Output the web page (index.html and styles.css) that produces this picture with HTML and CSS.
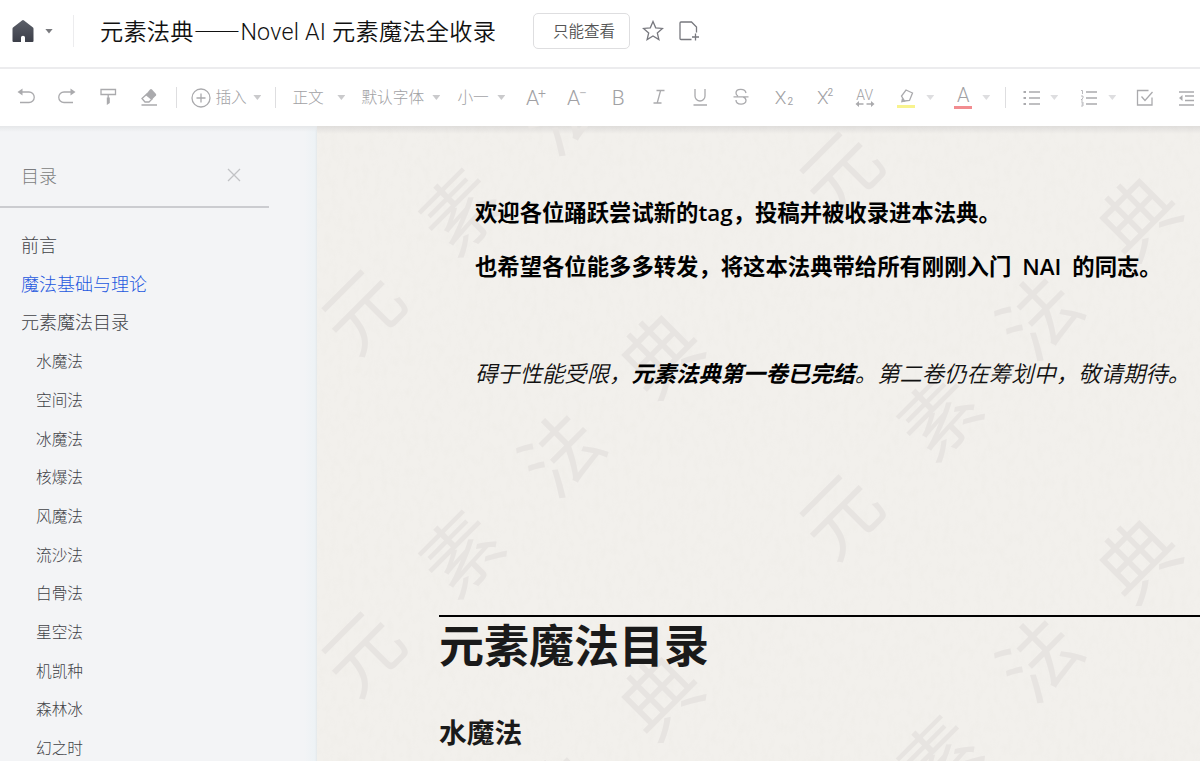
FILE: index.html
```html
<!DOCTYPE html>
<html lang="zh-CN">
<head>
    <meta charset="UTF-8">
    <meta name="viewport" content="width=device-width, initial-scale=1.0">
    <title>元素法典——Novel AI 元素魔法全收录</title>
    <link rel="stylesheet" href="styles.css">
</head>
<body>
    <header class="header">
        <svg class="home" width="24" height="24" viewBox="0 0 24 24">
            <defs><linearGradient id="homeFill" x1="0" y1="0" x2="0" y2="1"><stop offset="0" stop-color="#5c6069"/><stop offset="1" stop-color="#3b3e48"/></linearGradient></defs>
            <path fill="url(#homeFill)" d="M12 1 Q12.500 1 13 1.400L22 8.600Q22.500 9 22.500 10V22Q22.500 23 21.500 23H14V18.500Q14 16.800 12 16.800T10 18.500V23H2.500Q1.500 23 1.500 22V10Q1.500 9 2 8.600L11 1.400Q11.500 1 12 1Z"/>
        </svg>
        <i class="caret caret-dark"></i>
        <span class="header-line"></span>
        <h1 class="title">元素法典<span class="dash">——</span>Novel AI 元素魔法全收录</h1>
        <button class="readonly">只能查看</button>
        <svg class="star" width="22" height="22" viewBox="0 0 22 22"><path d="M11 1.500l2.700 6.300 6.800.6-5.200 4.500 1.600 6.700-5.900-3.600-5.900 3.600 1.600-6.700L1.500 8.400l6.800-.6z"/></svg>
        <svg class="addfile" width="22" height="22" viewBox="0 0 22 22"><path d="M13.500 19.500H3Q2 19.500 2 18.500V3Q2 2 3 2H13.500L18.500 7V12.500M17.500 13.500V20.500M14 17H21"/></svg>
    </header>

    <nav class="toolbar">
        <span class="tool"><svg width="20" height="20" viewBox="0 0 20 20"><path d="M3 5H13A4.900 4.900 0 0 1 13 15.500H4"/><path class="solid" d="M6.500 1.500V8.500L1.500 5Z"/></svg></span>
        <span class="tool"><svg width="20" height="20" viewBox="0 0 20 20"><path d="M17 5H7A4.900 4.900 0 0 0 7 15.500H16"/><path class="solid" d="M13.500 1.500V8.500L18.500 5Z"/></svg></span>
        <span class="tool"><svg width="20" height="20" viewBox="0 0 20 20"><path d="M3 2.500H17.500V7.500H3ZM10.200 7.500V11"/><path class="solid" d="M8.800 10.500H11.800V16L8.800 18Z"/></svg></span>
        <span class="tool"><svg width="20" height="20" viewBox="0 0 20 20"><path d="M2.500 18H18M3 11.500L8 7L13 12L10 15H6Z"/><path class="solid" d="M6.500 8L11 2.500Q12 1.500 13 2.500L17 7Q17.500 8 17 8.500L12.500 13Z"/></svg></span>
        <span class="line line-first"></span>
        <svg class="plus" width="20" height="20" viewBox="0 0 20 20"><circle cx="10" cy="10" r="9"/><path d="M5.500 10H14.500M10 5.500V14.500"/></svg>
        <span class="label insert">插入</span><i class="caret caret-insert"></i>
        <span class="line line-style"></span>
        <span class="label style">正文</span><i class="caret"></i>
        <span class="label family">默认字体</span><i class="caret"></i>
        <span class="label size">小一</span><i class="caret caret-size"></i>
        <span class="tool letter">A<sup>+</sup></span>
        <span class="tool letter">A<sup>−</sup></span>
        <span class="tool letter bold">B</span>
        <span class="tool letter"><svg width="20" height="20" viewBox="0 0 20 20"><path d="M7.500 3.500H15.500M4.500 16H12.500M11.600 3.500L8.200 16"/></svg></span>
        <span class="tool letter"><svg width="20" height="20" viewBox="0 0 20 20"><path d="M5 2V9A5 5 0 0 0 15 9V2M3.500 18H17"/></svg></span>
        <span class="tool letter"><svg width="20" height="20" viewBox="0 0 20 20"><path d="M15 6C14 1 5 1.500 5 6Q5 8 7 9M2.500 9.800H17.500M12 9.800Q15 11 15 13.500C15 18.500 5 18.500 5 13"/></svg></span>
        <span class="tool letter x-letter">X<sub>2</sub></span>
        <span class="tool letter x-letter">X<sup>2</sup></span>
        <span class="tool spacing"><span>AV</span><svg width="20" height="6" viewBox="0 0 20 6"><path d="M2 3H8.500M11.500 3H18"/><path class="solid" d="M4 0V6L.5 3ZM16 0V6L19.500 3Z"/></svg></span>
        <span class="tool"><svg class="marker" width="20" height="22" viewBox="0 0 20 22"><path d="M10 2L16.500 5L13.500 12.500L8.500 13L5.500 8Z"/><path class="solid" d="M6 10L9.500 13.500L5 14.500Z"/><path class="yellow" d="M1 18.500H19"/></svg></span>
        <i class="caret light caret-marker"></i>
        <span class="color"><span>A</span></span>
        <i class="caret light"></i>
        <span class="line line-list"></span>
        <svg width="20" height="20" viewBox="0 0 20 20"><path d="M7 4H18M7 10H18M7 16H18"/><path class="solid" d="M1.500 3H4V5H1.500ZM1.500 9H4V11H1.500ZM1.500 15H4V17H1.500Z"/></svg>
        <i class="caret light"></i>
        <svg class="numbers" width="20" height="20" viewBox="0 0 20 20"><path d="M7 4H18M7 10H18M7 16H18"/><path class="thin" d="M2 2.500H3.500V6M2 8H4V10L2 12H4M2 14H4V18H2M2.500 16H4"/></svg>
        <i class="caret light"></i>
        <svg class="check" width="20" height="20" viewBox="0 0 20 20"><path d="M13.500 2.500H2.500V17H17V9.500M6.500 8.500L10 12.500L17.500 4"/></svg>
        <svg class="indent" width="20" height="20" viewBox="0 0 20 20"><path d="M2 4H17M8 8H17M8 12.500H17M2 17H17"/><path class="solid" d="M5.500 7V13L2 10Z"/></svg>
    </nav>

    <div class="content">
        <aside class="sidebar">
            <div class="sidebar-head">
                <span>目录</span>
                <svg width="14" height="14" viewBox="0 0 14 14"><path d="M1 1L13 13M13 1L1 13"/></svg>
            </div>
            <ul class="catalog">
                <li>前言</li>
                <li class="active">魔法基础与理论</li>
                <li>元素魔法目录</li>
                <li class="child">水魔法</li>
                <li class="child">空间法</li>
                <li class="child">冰魔法</li>
                <li class="child">核爆法</li>
                <li class="child">风魔法</li>
                <li class="child">流沙法</li>
                <li class="child">白骨法</li>
                <li class="child">星空法</li>
                <li class="child">机凯种</li>
                <li class="child">森林冰</li>
                <li class="child">幻之时</li>
            </ul>
        </aside>

        <main class="paper">
            <svg class="watermark" width="884" height="635" viewBox="316 126 884 635">
                <defs>
                    <filter id="grain" x="0" y="0" width="100%" height="100%">
                        <feTurbulence type="fractalNoise" baseFrequency="0.16 0.09" numOctaves="3" seed="4"/>
                        <feColorMatrix values="0 0 0 0 .55  0 0 0 0 .52  0 0 0 0 .46  .7 0 0 0 -.3"/>
                    </filter>
                    <g id="mark">
                        <text transform="translate(0 0) rotate(-45)" y="28">元</text>
                        <text transform="translate(99 -99) rotate(-45)" y="28">素</text>
                        <text transform="translate(199 -199) rotate(-45)" y="28">法</text>
                        <text transform="translate(298 -298) rotate(-45)" y="28">典</text>
                    </g>
                </defs>
                <rect x="316" y="126" width="884" height="635" filter="url(#grain)" opacity=".13"/>
                <use href="#mark" x="363" y="311"/>
                <use href="#mark" x="363" y="653"/>
                <use href="#mark" x="363" y="995"/>
                <use href="#mark" x="841" y="173"/>
                <use href="#mark" x="841" y="516"/>
                <use href="#mark" x="841" y="858"/>
            </svg>
            <article class="doc">
                <p class="strong">欢迎各位踊跃尝试新的<span class="latin">tag</span>，投稿并被收录进本法典。</p>
                <p class="strong">也希望各位能多多转发，将这本法典带给所有刚刚入门<span class="latin nai">NAI</span>的同志。</p>
                <p class="notice">碍于性能受限，<b>元素法典第一卷已完结</b>。第二卷仍在筹划中，敬请期待。</p>
                <h2>元素魔法目录</h2>
                <h3>水魔法</h3>
            </article>
        </main>
    </div>
</body>
</html>
```
FILE: styles.css
```css
* {
    box-sizing: border-box;
}

body {
    margin: 0;
    height: 761px;
    overflow: hidden;
    font-family: Roboto, "Noto Sans CJK SC", sans-serif;
    font-weight: 300;
    color: #222;
    background: #fff;
}

svg {
    flex: none;
    fill: none;
    stroke: #aaaaad;
    stroke-width: 1.3;
}

.header {
    display: flex;
    align-items: center;
    height: 69px;
    padding: 0 0 5px 11px;
    border-bottom: 2px solid #ececee;
}

.home {
    stroke: none;
}

.caret {
    flex: none;
    width: 8px;
    height: 5px;
    background: #cacacc;
    clip-path: polygon(0 0, 100% 0, 50% 100%);
}

.caret-dark {
    margin-left: 10px;
    background: #797a7e;
}

.light {
    background: #dedee0;
}

.header-line {
    width: 1px;
    height: 32px;
    margin: 0 26px 0 20px;
    background: #ececee;
}

.title {
    width: 433px;
    margin: 0;
    font-size: 23.2px;
    font-weight: 350;
    letter-spacing: .25px;
    line-height: 34px;
    white-space: nowrap;
    color: #111;
}

.dash {
    font-family: "Noto Sans CJK SC", sans-serif;
}

.readonly {
    width: 97px;
    height: 36px;
    padding: 0 0 2px 5px;
    border: 1px solid #dedee0;
    border-radius: 5px;
    background: #fff;
    font: 350 15.5px "Noto Sans CJK SC", sans-serif;
    color: #555;
}

.star {
    margin-left: 12px;
    stroke: #77787e;
}

.addfile {
    margin-left: 14px;
    stroke: #77787e;
}

.toolbar {
    display: flex;
    align-items: center;
    height: 57px;
    padding-left: 5px;
    color: #a1a1a4;
}

.tool {
    display: flex;
    flex: none;
    align-items: center;
    justify-content: center;
    width: 41.1px;
    height: 40px;
}

.tool svg {
    margin-top: -1px;
}

.solid {
    fill: #aaaaad;
    stroke: none;
}

.line {
    flex: none;
    width: 1px;
    height: 21px;
    background: #dedee0;
}

.line-first {
    margin: 0 14px 0 7px;
}

.line-style {
    margin: 0 16px 0 14px;
}

.line-list {
    margin: 0 16px 0 15px;
}

.label {
    flex: none;
    font-size: 15.7px;
    line-height: 24px;
    white-space: nowrap;
}

.insert {
    width: 38px;
    margin-left: 4px;
}

.style {
    width: 45px;
}

.family {
    width: 71px;
    margin-left: 16px;
}

.size {
    width: 40px;
    margin-left: 17px;
}

.caret-size {
    margin-right: 10px;
}

.letter {
    font-size: 21px;
    line-height: 24px;
}

.letter sup,
.letter sub {
    font-size: 14px;
    line-height: 12px;
}

.letter sup {
    margin: -10px 0 0 -1px;
}

.letter sub {
    margin: 9px 0 0 1px;
}

.x-letter {
    padding-left: 3px;
    font-size: 19px;
}

.x-letter sup,
.x-letter sub {
    font-size: 10px;
    font-weight: 400;
}

.spacing {
    flex-direction: column;
    font-size: 14px;
    line-height: 13px;
}

.yellow {
    stroke: #f8f38e;
    stroke-width: 3;
}

.tool .marker {
    margin-top: 3px;
}

.color {
    display: flex;
    justify-content: center;
    width: 18px;
    height: 22px;
    margin: 0 10px 0 20px;
    border-bottom: 3px solid #f28c90;
    font-size: 20px;
    line-height: 17px;
}

.line-list + svg {
    margin-right: 8px;
}

.numbers {
    margin: 0 9px 0 21px;
}

.thin {
    stroke-width: .8;
}

.check {
    margin-left: 19px;
}

.indent {
    margin-left: 22px;
}

.content {
    display: flex;
    height: 635px;
}

.sidebar {
    width: 317px;
    background: linear-gradient(#e5e7e9, rgba(229, 231, 233, 0) 6px), linear-gradient(to right, #f3f4f6 304px, #edf2f5 315px, #e4e8ea);
}

.sidebar-head {
    display: flex;
    align-items: center;
    justify-content: space-between;
    width: 269px;
    height: 82px;
    padding: 17px 28px 0 21px;
    border-bottom: 2px solid #cbccd0;
    font-size: 18px;
    color: #7c7d80;
}

.sidebar-head svg {
    stroke: #c1c2c5;
}

.catalog {
    margin: 0;
    padding: 19px 0 0 21px;
    list-style: none;
    font-size: 18px;
    line-height: 38.7px;
    color: #414247;
}

.active {
    color: #2458df;
}

.child {
    padding-left: 15px;
    font-size: 15.7px;
}

.paper {
    display: grid;
    flex: 1;
    overflow: hidden;
    background: linear-gradient(#dfdddb, #f2f0ec 8px);
}

.watermark,
.doc {
    grid-area: 1 / 1;
}

.watermark {
    stroke: none;
    margin-left: -1px;
}

.watermark text {
    fill: #e7e4e1;
    font: 400 78px "Noto Sans CJK SC", sans-serif;
    text-anchor: middle;
}

.doc {
    padding: 59px 0 0 122px;
    color: #1a1a1a;
    z-index: 1;
}

.doc p {
    margin: 0;
    padding-left: 36px;
    font-family: "Noto Sans CJK SC", sans-serif;
    font-size: 22.35px;
    line-height: 53px;
    white-space: nowrap;
}

.doc .strong {
    font-weight: 700;
    color: #000;
}

.latin {
    font-family: "Open Sans", sans-serif;
    font-weight: 600;
}

.nai {
    margin: 0 11px;
}

.doc .notice {
    margin-top: 53px;
    font-style: italic;
    font-weight: 350;
    color: #111;
}

.notice b {
    font-weight: 700;
    color: #000;
}

.doc h2 {
    margin: 216px 0 0;
    border-top: 2px solid #000;
    font-size: 45px;
    line-height: 62px;
}

.doc h3 {
    margin: 34px 0 0;
    font-size: 27.7px;
    line-height: 42px;
}
```
